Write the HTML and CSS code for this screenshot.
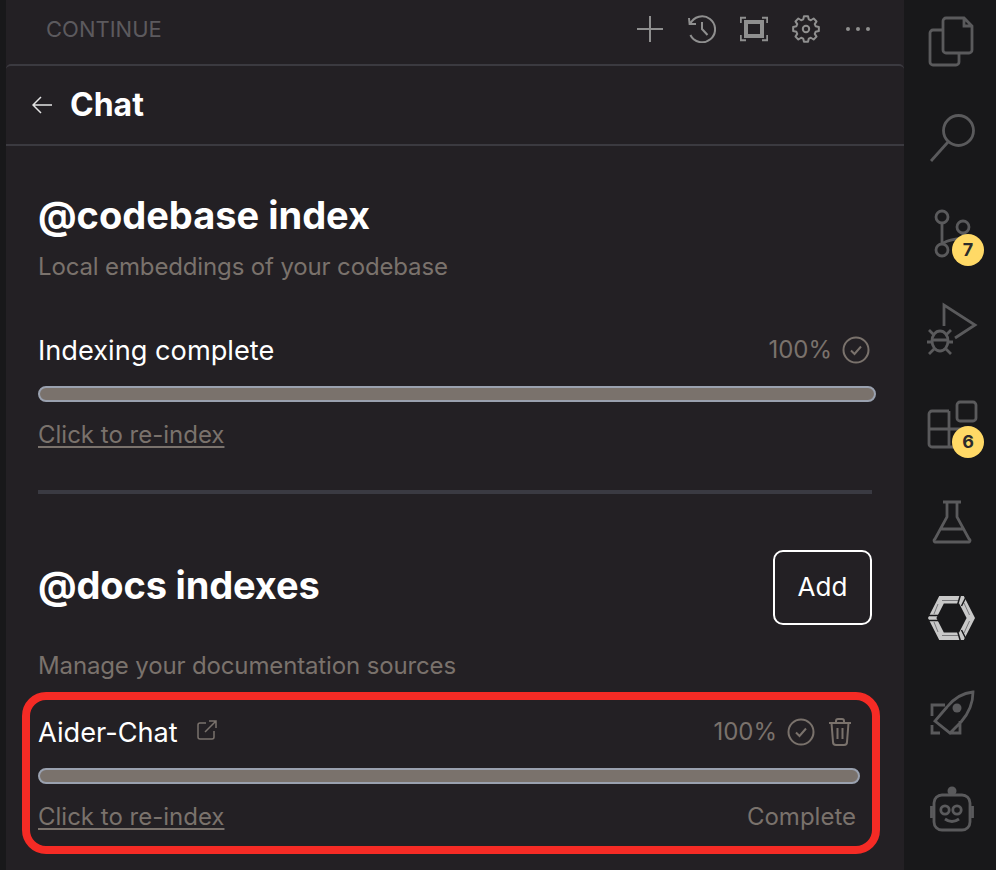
FILE: index.html
```html
<!DOCTYPE html>
<html lang="en">
<head>
    <meta charset="UTF-8">
    <meta name="viewport" content="width=device-width, initial-scale=1.0">
    <link rel="stylesheet" href="styles.css">
    <title>Continue</title>
</head>
<body>
<div class="app">
    <div class="strip"></div>

    <div class="panel">
        <div class="topbar">
            <span class="topbar-title">CONTINUE</span>
            <div class="topbar-icons">
                <svg class="top-icon" viewBox="0 0 28 28"><path d="M14 1V27M1 14H27"/></svg>
                <svg class="top-icon" viewBox="0 0 28 28"><path d="M1 3L1.6 9H8M2.2 9A13 13 0 1 1 2.4 20M14 7V14L19.5 20"/></svg>
                <svg class="top-icon" viewBox="0 0 28 28"><path d="M.75 8V2.75H6M22 2.75H27.25V8M.75 20V25.25H6M22 25.25H27.25V20"/><rect class="thick" x="6" y="7" width="16" height="14"/></svg>
                <svg class="top-icon" viewBox="-14 -14 28 28"><path stroke-linejoin="round" d="M-2.03 -12.84L2.03 -12.84L2.76 -9.61L4.85 -8.75L7.64 -10.52L10.52 -7.64L8.75 -4.85L9.61 -2.76L12.84 -2.03L12.84 2.03L9.61 2.76L8.75 4.85L10.52 7.64L7.64 10.52L4.85 8.75L2.76 9.61L2.03 12.84L-2.03 12.84L-2.76 9.61L-4.85 8.75L-7.64 10.52L-10.52 7.64L-8.75 4.85L-9.61 2.76L-12.84 2.03L-12.84 -2.03L-9.61 -2.76L-8.75 -4.85L-10.52 -7.64L-7.64 -10.52L-4.85 -8.75L-2.76 -9.61Z"/><circle r="3.2"/></svg>
                <svg class="top-icon" viewBox="0 0 28 28"><circle class="dot" cx="4" cy="14" r="2"/><circle class="dot" cx="14" cy="14" r="2"/><circle class="dot" cx="24" cy="14" r="2"/></svg>
            </div>
        </div>

        <div class="chatbar">
            <svg class="back-icon" viewBox="0 0 20 18"><path d="M9 1L1 9L9 17M1 9H20"/></svg>
            <span class="chatbar-title">Chat</span>
        </div>

        <div class="content">
            <h2 class="heading">@codebase index</h2>
            <p class="muted sub">Local embeddings of your codebase</p>

            <div class="status-row first-status">
                <span class="status-name">Indexing complete</span>
                <span class="status-right">
                    <span class="muted">100%</span>
                    <svg class="check-icon" viewBox="0 0 28 28"><circle cx="14" cy="14" r="12.5"/><path d="M9 14.5L12.5 18L19 10.5"/></svg>
                </span>
            </div>
            <div class="bar bar-wide"></div>
            <a class="muted reindex" href="#">Click to re-index</a>

            <div class="divider"></div>

            <div class="docs-head">
                <h2 class="heading docs-heading">@docs indexes</h2>
                <button class="add-btn">Add</button>
            </div>
            <p class="muted manage">Manage your documentation sources</p>

            <div class="doc-card">
                <div class="status-row">
                    <span class="doc-name">
                        <span class="status-name">Aider-Chat</span>
                        <svg class="link-icon" viewBox="0 0 20 20"><path d="M9 3H3a2 2 0 0 0-2 2V17a2 2 0 0 0 2 2H15a2 2 0 0 0 2-2V11M8 12L19 1M12 1H19V8"/></svg>
                    </span>
                    <span class="status-right card-right">
                        <span class="muted">100%</span>
                        <svg class="check-icon" viewBox="0 0 28 28"><circle cx="14" cy="14" r="12.5"/><path d="M9 14.5L12.5 18L19 10.5"/></svg>
                        <svg class="trash-icon" viewBox="0 0 24 28"><path d="M1 5H23M8 5V3a2 2 0 0 1 2-2H14a2 2 0 0 1 2 2V5M3.5 5L5 24a3 3 0 0 0 3 3H16a3 3 0 0 0 3-3L20.5 5M9.5 10V21M14.500 10V21"/></svg>
                    </span>
                </div>
                <div class="bar"></div>
                <div class="doc-foot">
                    <a class="muted reindex" href="#">Click to re-index</a>
                    <span class="muted">Complete</span>
                </div>
            </div>
        </div>
    </div>

    <div class="activity">
        <div class="act-item">
            <svg class="act-icon" viewBox="0 0 72 56"><path d="M32 4H50L58 12V36a3 3 0 0 1-3 3H32a3 3 0 0 1-3-3V7a3 3 0 0 1 3-3ZM50 4V12H58M29 16H19a3 3 0 0 0-3 3V48a3 3 0 0 0 3 3H42a3 3 0 0 0 3-3V39"/></svg>
        </div>
        <div class="act-item">
            <svg class="act-icon" viewBox="0 0 72 56"><circle cx="44.500" cy="20.500" r="15"/><path d="M34 32L17 51"/></svg>
        </div>
        <div class="act-item">
            <svg class="act-icon" viewBox="0 0 72 56"><circle cx="28" cy="11" r="6"/><circle cx="28" cy="44" r="6"/><circle cx="49" cy="21" r="6"/><path d="M28 17V38M49 27V30C49 34 34 32 28 38"/></svg>
            <span class="badge badge-git">7</span>
        </div>
        <div class="act-item">
            <svg class="act-icon" viewBox="0 0 72 56"><path d="M30 24V3L61 23L41 36M18 38H34M15 28L20 33M37 28L32 33M13 40H18M34 40H39M15 52L20 47M37 52L32 47"/><ellipse cx="26" cy="39" rx="8" ry="10"/></svg>
        </div>
        <div class="act-item">
            <svg class="act-icon" viewBox="0 0 72 56"><rect x="43" y="4" width="19" height="19" rx="3"/><path d="M35 13H18a3 3 0 0 0-3 3V46a3 3 0 0 0 3 3H51V31H15M35 13V49"/></svg>
            <span class="badge badge-ext">6</span>
        </div>
        <div class="act-item">
            <svg class="act-icon" viewBox="0 0 72 56"><path d="M29 8H47M33 8V23L21 45a1.500 1.500 0 0 0 1.500 3H53.500a1.500 1.500 0 0 0 1.500-3L43 23V8M27 35H49"/></svg>
        </div>
        <div class="act-item">
            <svg class="hex-icon" viewBox="0 0 72 56">
                <path class="hex-ring" d="M27.500 9.750H47.500L56.800 28L47.500 46.250H27.500L18.200 28Z"/>
                <path class="hex-thin" d="M28 10.500H44M50 13L55.500 25M55.500 31L50 43M44 45.500H28M24 42L20 32M20 24L24 14"/>
                <path class="hex-line" d="M47 3L43.500 15M53 5L47.500 16M11 25.500H25M11 30.500H25M47 53L43.500 41M53 51L47.500 40"/>
            </svg>
        </div>
        <div class="act-item">
            <svg class="act-icon" viewBox="0 0 72 56"><path d="M59 6C49 7 41 11 33 21L21 35L36 47L47 36C55 27 59 17 59 6ZM31 19H18V30M18 39V47H26M36 47H46V35"/><circle class="fill" cx="43" cy="22" r="4.500"/></svg>
        </div>
        <div class="act-item">
            <svg class="act-icon" viewBox="0 0 72 56"><rect x="20" y="13" width="36" height="35" rx="8"/><circle class="fill" cx="38" cy="9" r="4.500"/><path d="M17.500 24V36M58.500 24V36M31 37Q38 42 45 37"/><circle cx="31" cy="28" r="4.200"/><circle cx="43" cy="28" r="4.200"/></svg>
        </div>
    </div>
</div>
</body>
</html>
```

FILE: styles.css
```css
* {
    box-sizing: border-box;
}
body {
    margin: 0;
    height: 870px;
    overflow: hidden;
    background: #18181a;
    font-family: Inter, "Liberation Sans", sans-serif;
    color: #fff;
}
a {
    color: inherit;
}
svg {
    display: block;
    fill: none;
}
.app {
    display: flex;
    height: 870px;
}
.strip {
    width: 6px;
    background: #18181a;
}
.panel {
    width: 898px;
    background: #232024;
}

.topbar {
    height: 64px;
    display: flex;
    align-items: center;
    justify-content: space-between;
    padding: 0 32px 6px 40px;
}
.topbar-title {
    font-size: 22px;
    color: #5c5a5e;
}
.topbar-icons {
    display: flex;
    gap: 24px;
}
.top-icon {
    width: 28px;
    height: 28px;
    stroke: #8f8f8f;
    stroke-width: 2;
}
.top-icon .thick {
    stroke-width: 4;
}
.top-icon .dot {
    fill: #8f8f8f;
    stroke: none;
}

.chatbar {
    height: 82px;
    display: flex;
    align-items: center;
    gap: 18px;
    padding-left: 26px;
    border-top: 2px solid #3b3a40;
    border-bottom: 2px solid #3b3a40;
    border-radius: 5px 5px 0 0;
}
.back-icon {
    width: 20px;
    height: 18px;
    stroke: #e4e4e4;
    stroke-width: 1.5;
}
.chatbar-title {
    font-size: 32px;
    font-weight: 700;
    margin-bottom: 2px;
}

.content {
    padding: 47px 32px 0;
}
.heading {
    margin: 0;
    font-size: 38px;
    line-height: 44px;
    font-weight: 700;
}
.docs-heading {
    margin-bottom: 5px;
    letter-spacing: -0.15px;
}
.muted {
    font-size: 24px;
    line-height: 30px;
    color: #7a726c;
}
.sub {
    margin: 15px 0 0;
    letter-spacing: -0.14px;
}
.status-row {
    display: flex;
    align-items: center;
    justify-content: space-between;
    height: 36px;
}
.first-status {
    margin-top: 50px;
}
.status-name {
    font-size: 27.2px;
    line-height: 36px;
    margin-top: 2px;
}
.status-right {
    display: flex;
    align-items: center;
    gap: 10px;
    padding-right: 2px;
}
.card-right {
    padding-right: 8px;
}
.check-icon {
    width: 28px;
    height: 28px;
    stroke: #7a726c;
    stroke-width: 2;
}
.bar {
    height: 16px;
    margin-top: 18px;
    background: #7a726c;
    border: 2px solid #9aa1af;
    border-radius: 8px;
}
.bar-wide {
    margin-right: -4px;
}
.reindex {
    display: block;
    margin-top: 18px;
    text-decoration: underline;
    text-underline-offset: 3px;
}
.divider {
    height: 4px;
    margin-top: 40px;
    background: #3a3a42;
}

.docs-head {
    display: flex;
    align-items: center;
    justify-content: space-between;
    margin-top: 56px;
}
.add-btn {
    width: 99px;
    height: 75px;
    padding: 0 0 2px;
    background: transparent;
    border: 2px solid #fff;
    border-radius: 10px;
    color: #fff;
    font-family: inherit;
    font-size: 26px;
}
.manage {
    margin: 26px 0 0;
    letter-spacing: -0.14px;
}

/* red highlight round the docs row */
.doc-card {
    margin: 11px -8px 0 -16px;
    padding: 14px 12px 14px 8px;
    border: 8px solid #f52b25;
    border-radius: 24px;
}
.doc-name {
    display: flex;
    align-items: center;
    gap: 19px;
}
.link-icon {
    width: 20px;
    height: 20px;
    margin-top: -4px;
    stroke: #7a726c;
    stroke-width: 1.5;
}
.trash-icon {
    width: 24px;
    height: 28px;
    margin-left: 3px;
    stroke: #7a726c;
    stroke-width: 2;
}
.doc-foot {
    display: flex;
    justify-content: space-between;
    align-items: flex-end;
    padding-right: 4px;
}

.activity {
    width: 92px;
    display: flex;
    flex-direction: column;
    gap: 40px;
    padding: 14px 0 0 0;
    background: #18181a;
}
.act-item {
    position: relative;
    height: 56px;
    padding-left: 10px;
}
.act-icon {
    width: 72px;
    height: 56px;
    stroke: #5a5a5c;
    stroke-width: 2.8;
}
.act-icon .fill {
    fill: #5a5a5c;
    stroke: none;
}
.hex-icon {
    width: 72px;
    height: 56px;
}
.hex-ring {
    stroke: #c8c8c8;
    stroke-width: 7.5;
}
.hex-line {
    stroke: #18181a;
    stroke-width: 1.5;
}
.hex-thin {
    stroke: #77777a;
    stroke-width: 1;
}
.badge {
    position: absolute;
    left: 48px;
    width: 32px;
    height: 32px;
    border-radius: 50%;
    background: #ffd966;
    color: #2b2b2b;
    font-size: 18px;
    font-weight: 700;
    line-height: 32px;
    text-align: center;
}
.badge-git {
    top: 28px;
}
.badge-ext {
    top: 28px;
}
```
